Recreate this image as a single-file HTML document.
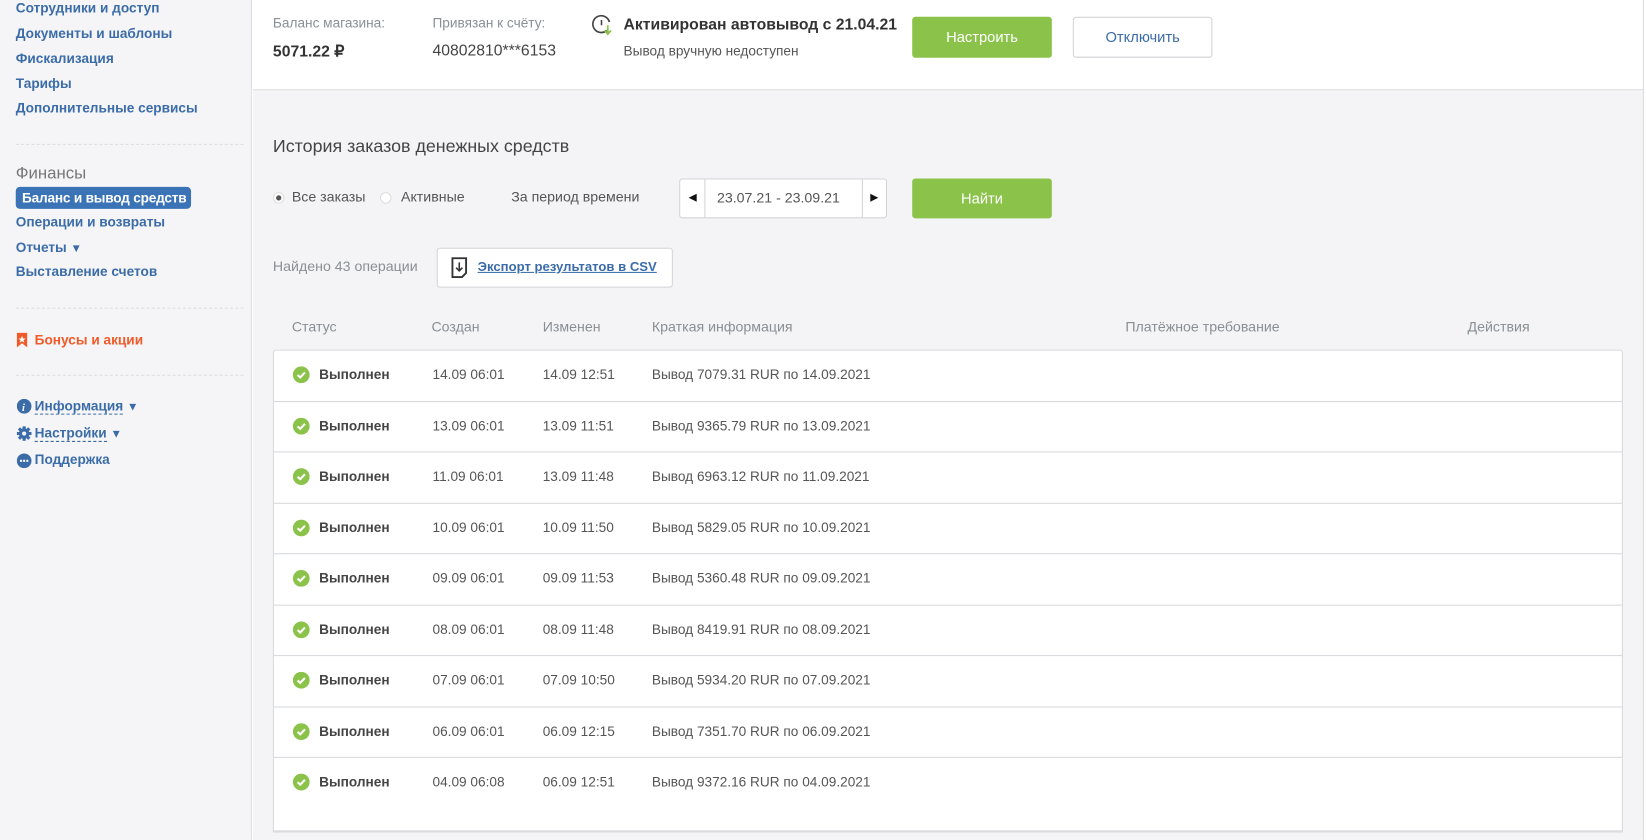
<!DOCTYPE html>
<html><head><meta charset="utf-8"><style>
*{box-sizing:border-box;margin:0;padding:0}
body{width:1646px;height:795px;overflow:hidden;background:#f4f4f6;font-family:"Liberation Sans",sans-serif;font-size:14px;color:#333;position:relative}
#w{position:absolute;left:0;top:0;width:1568px;height:800px;transform:scale(1.04974);transform-origin:0 0;background:#fff}
.a{position:absolute;white-space:nowrap}
.side{position:absolute;left:0;top:0;width:240px;height:800px;background:#f5f5f7;border-right:1px solid #dedfe2}
.lnk{color:#3b6ca8;font-weight:bold;font-size:13px}
.hr{position:absolute;left:15px;width:217px;border-top:1px dashed #dcdde0}
.main{position:absolute;left:241px;top:0;width:1325px;height:800px;background:#f4f4f6;border-right:1px solid #dcdcdc}
.top{position:absolute;left:241px;top:0;width:1325px;height:86px;background:#fff;border-bottom:1px solid #dcdcdc;border-right:1px solid #dcdcdc}
.gray{color:#8a8f94;font-size:13px}
.btn{position:absolute;border-radius:3px;text-align:center;font-size:14px}
.g{background:#8bc34a;color:#fff}
.tbl{position:absolute;left:260px;top:333px;width:1286px;background:#fff;border:1px solid #d8d9dc;border-radius:3px 3px 0 0}
.row{position:relative;border-bottom:1px solid #d8d9dc}
.row>span{position:absolute;top:15px;font-size:13px;color:#555}
.row>span.ic{left:18px;top:15px}
.hd{color:#8a8f94;font-size:13.5px}
</style></head><body><div id="w">
<div class="side"></div>
<div class="a lnk" style="left:15px;top:0px">Сотрудники и доступ</div>
<div class="a lnk" style="left:15px;top:24px">Документы и шаблоны</div>
<div class="a lnk" style="left:15px;top:48px">Фискализация</div>
<div class="a lnk" style="left:15px;top:72px">Тарифы</div>
<div class="a lnk" style="left:15px;top:95px">Дополнительные сервисы</div>
<div class="hr" style="top:137px"></div>
<div class="a" style="left:15px;top:157px;font-size:16px;color:#777">Финансы</div>
<div class="a" style="left:15px;top:178px;width:167px;height:21px;background:#3a73b6;border-radius:4px;color:#fff;font-weight:bold;font-size:13px;padding:3px 0 0 6px;letter-spacing:-0.2px">Баланс и вывод средств</div>
<div class="a lnk" style="left:15px;top:204px">Операции и возвраты</div>
<div class="a lnk" style="left:15px;top:228px">Отчеты <span style="font-size:11px">▼</span></div>
<div class="a lnk" style="left:15px;top:251px">Выставление счетов</div>
<div class="hr" style="top:293px"></div>
<svg class="a" style="left:16px;top:317px" width="10" height="14"><path d="M0 0H10V14L5 10L0 14Z" fill="#f05a28"/><path d="M5 3L6 5.5H8.5L6.5 7L7.2 9.5L5 8L2.8 9.5L3.5 7L1.5 5.5H4Z" fill="#fff"/></svg>
<div class="a" style="left:33px;top:316px;color:#f05a28;font-weight:bold;font-size:13px">Бонусы и акции</div>
<div class="hr" style="top:357px"></div>
<svg class="a" style="left:16px;top:380px" width="14" height="14"><circle cx="7" cy="7" r="7" fill="#3b6ca8"/><text x="5" y="11.5" font-size="10" font-style="italic" font-weight="bold" fill="#fff" font-family="Liberation Serif">i</text></svg>
<div class="a lnk" style="left:33px;top:379px"><span style="border-bottom:1px dashed #3b6ca8">Информация</span> <span style="font-size:11px">▼</span></div>
<svg class="a" style="left:16px;top:406px" width="14" height="14" viewBox="0 0 14 14"><g fill="#3b6ca8"><circle cx="7" cy="7" r="5"/><rect x="5.5" y="0" width="3" height="14"/><rect x="0" y="5.5" width="14" height="3"/><rect x="5.5" y="0" width="3" height="14" transform="rotate(45 7 7)"/><rect x="5.5" y="0" width="3" height="14" transform="rotate(-45 7 7)"/></g><circle cx="7" cy="7" r="2" fill="#f5f5f7"/></svg>
<div class="a lnk" style="left:33px;top:405px"><span style="border-bottom:1px dashed #3b6ca8">Настройки</span> <span style="font-size:11px">▼</span></div>
<svg class="a" style="left:16px;top:432px" width="14" height="14"><circle cx="7" cy="7" r="7" fill="#3b6ca8"/><circle cx="4" cy="7" r="1.1" fill="#fff"/><circle cx="7" cy="7" r="1.1" fill="#fff"/><circle cx="10" cy="7" r="1.1" fill="#fff"/></svg>
<div class="a lnk" style="left:33px;top:430px">Поддержка</div>

<div class="main"></div>
<div class="top"></div>
<div class="a gray" style="left:260px;top:14px">Баланс магазина:</div>
<div class="a" style="left:260px;top:40px;font-weight:bold;font-size:15px;color:#333">5071.22 ₽</div>
<div class="a gray" style="left:412px;top:14px">Привязан к счёту:</div>
<div class="a" style="left:412px;top:40px;font-size:15px;color:#444">40802810***6153</div>
<svg class="a" style="left:564px;top:14px" width="20" height="22" viewBox="0 0 20 22"><path d="M14 15A8 8 0 1 1 16.5 7" fill="none" stroke="#444" stroke-width="1.6"/><path d="M9 5V10" stroke="#444" stroke-width="1.5"/><path d="M15 10V18M12 15L15 18.5L18 15" fill="none" stroke="#8bc34a" stroke-width="1.7"/></svg>
<div class="a" style="left:594px;top:15px;font-weight:bold;font-size:15px;color:#333">Активирован автовывод с 21.04.21</div>
<div class="a" style="left:594px;top:41px;font-size:13px;color:#555">Вывод вручную недоступен</div>
<div class="btn g" style="left:869px;top:16px;width:133px;height:39px;line-height:39px">Настроить</div>
<div class="btn" style="left:1022px;top:16px;width:133px;height:39px;line-height:37px;background:#fff;border:1px solid #d3d4d7;color:#3b6ca8">Отключить</div>

<div class="a" style="left:260px;top:130px;font-size:17px;color:#444">История заказов денежных средств</div>
<div class="a" style="left:260px;top:183px;width:11px;height:11px;border-radius:50%;background:#fff;border:1px solid #ddd"><div style="width:5px;height:5px;border-radius:50%;background:#555;margin:2px"></div></div>
<div class="a" style="left:278px;top:180px;color:#555;font-size:13.5px">Все заказы</div>
<div class="a" style="left:362px;top:183px;width:11px;height:11px;border-radius:50%;background:#fff;border:1px solid #ddd"></div>
<div class="a" style="left:382px;top:180px;color:#555;font-size:13.5px">Активные</div>
<div class="a" style="left:487px;top:180px;color:#555;font-size:13.5px">За период времени</div>
<div class="a" style="left:647px;top:170px;width:198px;height:38px;background:#fff;border:1px solid #d3d4d7;border-radius:3px">
<div class="a" style="left:23px;top:0;width:1px;height:36px;background:#d3d4d7"></div>
<div class="a" style="left:173px;top:0;width:1px;height:36px;background:#d3d4d7"></div>
<div class="a" style="left:8px;top:12px;font-size:10px;color:#111">◀</div>
<div class="a" style="left:181px;top:12px;font-size:10px;color:#111">▶</div>
<div class="a" style="left:35px;top:10px;color:#555;font-size:13.5px">23.07.21 - 23.09.21</div></div>
<div class="btn g" style="left:869px;top:170px;width:133px;height:38px;line-height:38px">Найти</div>
<div class="a" style="left:260px;top:246px;color:#8a8f94;font-size:13.5px">Найдено 43 операции</div>
<div class="a" style="left:416px;top:236px;width:225px;height:38px;background:#fff;border:1px solid #d3d4d7;border-radius:3px">
<svg class="a" style="left:13px;top:8px" width="16" height="20"><path d="M1 1H14V15L10 19H1Z" fill="none" stroke="#333" stroke-width="1.8"/><path d="M7.5 5V13M4.5 10L7.5 13L10.5 10" fill="none" stroke="#333" stroke-width="1.5"/></svg>
<div class="a" style="left:38px;top:10px;color:#3b6ca8;text-decoration:underline;font-weight:bold;font-size:12.5px">Экспорт результатов в CSV</div></div>

<div class="a hd" style="left:278px;top:304px">Статус</div>
<div class="a hd" style="left:411px;top:304px">Создан</div>
<div class="a hd" style="left:517px;top:304px">Изменен</div>
<div class="a hd" style="left:621px;top:304px">Краткая информация</div>
<div class="a hd" style="left:1072px;top:304px">Платёжное требование</div>
<div class="a hd" style="left:1398px;top:304px">Действия</div>

<div class="tbl">
<div class="row" style="height:49px"><span class="ic"><svg width="16" height="16"><circle cx="8" cy="8" r="8" fill="#8bc34a"/><path d="M4.5 8.2L7 10.5L11.5 5.8" fill="none" stroke="#fff" stroke-width="2"/></svg></span><span style="left:43px;font-weight:bold;color:#444">Выполнен</span><span style="left:151px">14.09 06:01</span><span style="left:256px">14.09 12:51</span><span style="left:360px">Вывод 7079.31 RUR по 14.09.2021</span></div>
<div class="row" style="height:48px"><span class="ic"><svg width="16" height="16"><circle cx="8" cy="8" r="8" fill="#8bc34a"/><path d="M4.5 8.2L7 10.5L11.5 5.8" fill="none" stroke="#fff" stroke-width="2"/></svg></span><span style="left:43px;font-weight:bold;color:#444">Выполнен</span><span style="left:151px">13.09 06:01</span><span style="left:256px">13.09 11:51</span><span style="left:360px">Вывод 9365.79 RUR по 13.09.2021</span></div>
<div class="row" style="height:49px"><span class="ic"><svg width="16" height="16"><circle cx="8" cy="8" r="8" fill="#8bc34a"/><path d="M4.5 8.2L7 10.5L11.5 5.8" fill="none" stroke="#fff" stroke-width="2"/></svg></span><span style="left:43px;font-weight:bold;color:#444">Выполнен</span><span style="left:151px">11.09 06:01</span><span style="left:256px">13.09 11:48</span><span style="left:360px">Вывод 6963.12 RUR по 11.09.2021</span></div>
<div class="row" style="height:48px"><span class="ic"><svg width="16" height="16"><circle cx="8" cy="8" r="8" fill="#8bc34a"/><path d="M4.5 8.2L7 10.5L11.5 5.8" fill="none" stroke="#fff" stroke-width="2"/></svg></span><span style="left:43px;font-weight:bold;color:#444">Выполнен</span><span style="left:151px">10.09 06:01</span><span style="left:256px">10.09 11:50</span><span style="left:360px">Вывод 5829.05 RUR по 10.09.2021</span></div>
<div class="row" style="height:49px"><span class="ic"><svg width="16" height="16"><circle cx="8" cy="8" r="8" fill="#8bc34a"/><path d="M4.5 8.2L7 10.5L11.5 5.8" fill="none" stroke="#fff" stroke-width="2"/></svg></span><span style="left:43px;font-weight:bold;color:#444">Выполнен</span><span style="left:151px">09.09 06:01</span><span style="left:256px">09.09 11:53</span><span style="left:360px">Вывод 5360.48 RUR по 09.09.2021</span></div>
<div class="row" style="height:48px"><span class="ic"><svg width="16" height="16"><circle cx="8" cy="8" r="8" fill="#8bc34a"/><path d="M4.5 8.2L7 10.5L11.5 5.8" fill="none" stroke="#fff" stroke-width="2"/></svg></span><span style="left:43px;font-weight:bold;color:#444">Выполнен</span><span style="left:151px">08.09 06:01</span><span style="left:256px">08.09 11:48</span><span style="left:360px">Вывод 8419.91 RUR по 08.09.2021</span></div>
<div class="row" style="height:49px"><span class="ic"><svg width="16" height="16"><circle cx="8" cy="8" r="8" fill="#8bc34a"/><path d="M4.5 8.2L7 10.5L11.5 5.8" fill="none" stroke="#fff" stroke-width="2"/></svg></span><span style="left:43px;font-weight:bold;color:#444">Выполнен</span><span style="left:151px">07.09 06:01</span><span style="left:256px">07.09 10:50</span><span style="left:360px">Вывод 5934.20 RUR по 07.09.2021</span></div>
<div class="row" style="height:48px"><span class="ic"><svg width="16" height="16"><circle cx="8" cy="8" r="8" fill="#8bc34a"/><path d="M4.5 8.2L7 10.5L11.5 5.8" fill="none" stroke="#fff" stroke-width="2"/></svg></span><span style="left:43px;font-weight:bold;color:#444">Выполнен</span><span style="left:151px">06.09 06:01</span><span style="left:256px">06.09 12:15</span><span style="left:360px">Вывод 7351.70 RUR по 06.09.2021</span></div>
<div class="row" style="height:70px"><span class="ic"><svg width="16" height="16"><circle cx="8" cy="8" r="8" fill="#8bc34a"/><path d="M4.5 8.2L7 10.5L11.5 5.8" fill="none" stroke="#fff" stroke-width="2"/></svg></span><span style="left:43px;font-weight:bold;color:#444">Выполнен</span><span style="left:151px">04.09 06:08</span><span style="left:256px">06.09 12:51</span><span style="left:360px">Вывод 9372.16 RUR по 04.09.2021</span></div>
</div>
</div></body></html>
